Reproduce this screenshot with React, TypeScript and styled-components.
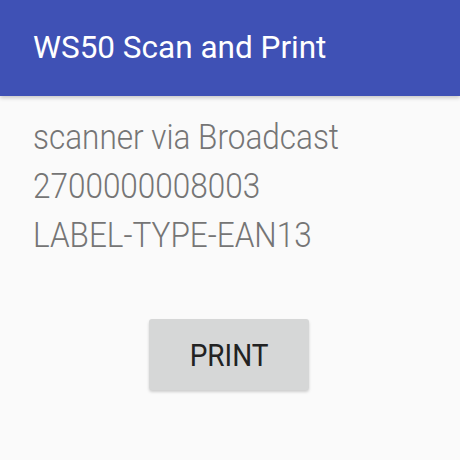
import React from "react";
import styled, { createGlobalStyle } from "styled-components";

const Global = createGlobalStyle`
  html, body { margin: 0; padding: 0; background: #fafafa; }
  body { font-family: Roboto, "Noto Sans", sans-serif; }
`;

const Page = styled.div`
  width: 460px;
  height: 460px;
  background: #fafafa;
  display: flex;
  flex-direction: column;
  overflow: hidden;
`;

const AppBar = styled.header`
  height: 96px;
  flex: none;
  background: #3f51b5;
  display: flex;
  align-items: center;
  padding: 0 33px;
  box-shadow: 0 2px 4px rgba(0, 0, 0, 0.2);
  position: relative;
  z-index: 1;
`;

const Title = styled.h1`
  margin: 0;
  color: #ffffff;
  font-family: Roboto, sans-serif;
  font-weight: 400;
  font-size: 31.5px;
  line-height: 38px;
`;

const Content = styled.main`
  padding: 17px 33px 0;
  display: flex;
  flex-direction: column;
`;

const Line = styled.div`
  color: #757575;
  font-family: Roboto, sans-serif;
  font-weight: 300;
  font-size: 35px;
  line-height: 49px;
  white-space: nowrap;
  transform: scaleX(0.9);
  transform-origin: left center;
`;

const ButtonRow = styled.div`
  display: flex;
  justify-content: center;
  margin-top: 59px;
  padding-right: 2px;
`;

const Button = styled.button`
  width: 160px;
  height: 71px;
  padding: 0;
  border: none;
  border-radius: 3px;
  background: #d6d7d7;
  color: #222222;
  font-family: Roboto, sans-serif;
  font-weight: 400;
  font-size: 32px;
  box-shadow: 0 2px 3px rgba(0, 0, 0, 0.18);
  display: flex;
  align-items: center;
  justify-content: center;
`;

const Label = styled.span`
  display: inline-block;
  transform: scaleX(0.875);
`;

export default function App() {
  return (
    <Page>
      <Global />
      <AppBar>
        <Title>WS50 Scan and Print</Title>
      </AppBar>
      <Content>
        <Line>scanner via Broadcast</Line>
        <Line>2700000008003</Line>
        <Line>LABEL-TYPE-EAN13</Line>
      </Content>
      <ButtonRow>
        <Button>
          <Label>PRINT</Label>
        </Button>
      </ButtonRow>
    </Page>
  );
}
